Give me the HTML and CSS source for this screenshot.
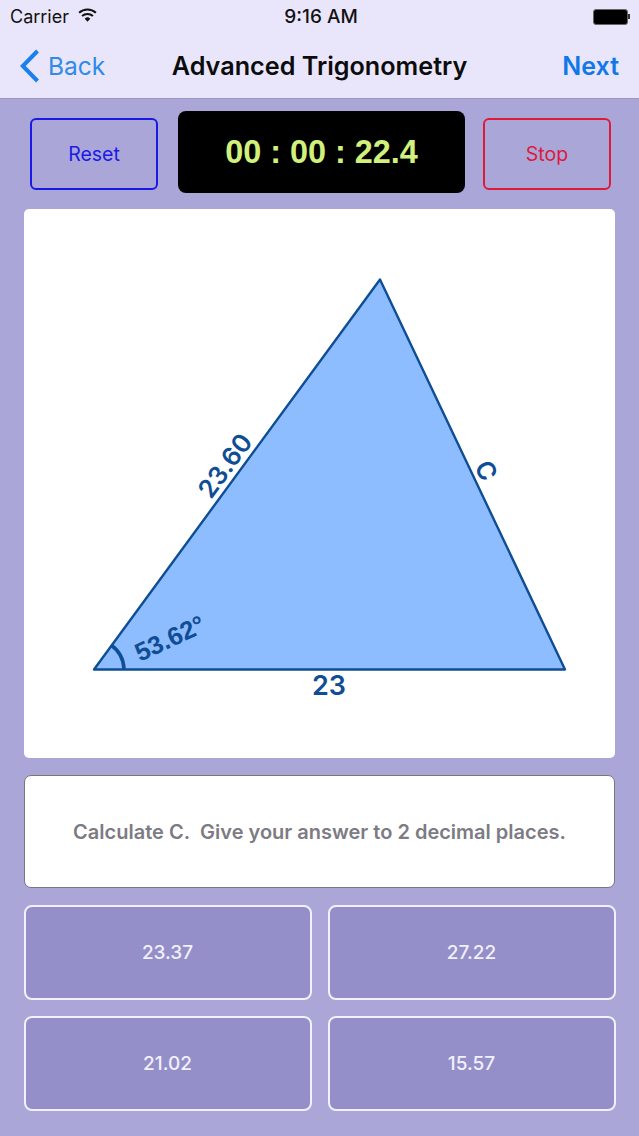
FILE: index.html
```html
<!DOCTYPE html>
<html lang="en">
<head>
    <meta charset="UTF-8">
    <meta name="viewport" content="width=device-width, initial-scale=1.0">
    <title>Advanced Trigonometry</title>
    <link rel="stylesheet" href="styles.css">
</head>
<body>
    <div id="header">
        <div class="status-bar">
            <div class="status-left">
                <span>Carrier</span>
                <svg class="wifi" width="19" height="14" viewBox="0 0 20 15">
                    <path d="M1 5.2 A13 13 0 0 1 19 5.2" fill="none" stroke="#111" stroke-width="2.2"/>
                    <path d="M4.2 8.6 A8.6 8.6 0 0 1 15.8 8.6" fill="none" stroke="#111" stroke-width="2.2"/>
                    <path d="M7 11.4 A4.4 4.4 0 0 1 13 11.4 L10 14.6 Z" fill="#111"/>
                </svg>
            </div>
            <span class="status-time">9:16 AM</span>
            <div class="battery"><div class="battery-body"></div><div class="battery-tip"></div></div>
        </div>
        <div class="nav-bar">
            <div class="nav-back">
                <svg width="22" height="34" viewBox="0 0 22 34">
                    <path d="M17.5 2 L2.8 17 L17.5 32" fill="none" stroke="#1a80ee" stroke-width="4"/>
                </svg>
                <span>Back</span>
            </div>
            <h1>Advanced Trigonometry</h1>
            <span class="nav-next">Next</span>
        </div>
    </div>

    <div id="container">
        <div class="toolbar">
            <button class="tool-btn reset">Reset</button>
            <div class="timer">00 : 00 : 22.4</div>
            <button class="tool-btn stop">Stop</button>
        </div>

        <div class="diagram">
            <svg width="591" height="549" viewBox="0 0 591 549">
                <polygon points="70,460.5 356,70.5 541,460.5" fill="#8dbdff" stroke="#0f4d94" stroke-width="2.4" stroke-linejoin="round"/>
                <path d="M87 436 A31 31 0 0 1 100 460" fill="none" stroke="#0f4d94" stroke-width="3.5"/>
                <text class="label angle" transform="translate(116 453) rotate(-25)">53.62°</text>
                <text class="label side" transform="translate(187 291) rotate(-53.7)">23.60</text>
                <text class="label side" transform="translate(450 257) rotate(64.6)">C</text>
                <text class="label" x="305" y="486" text-anchor="middle">23</text>
            </svg>
        </div>

        <div class="question">Calculate C.&nbsp; Give your answer to 2 decimal places.</div>

        <div class="answers">
            <button class="answer">23.37</button>
            <button class="answer">27.22</button>
            <button class="answer">21.02</button>
            <button class="answer">15.57</button>
        </div>
    </div>
</body>
</html>
```
FILE: styles.css
```css
* {
    margin: 0;
    padding: 0;
    box-sizing: border-box;
}
body {
    font-family: Inter, "Liberation Sans", sans-serif;
    background-color: #aaa7d8;
    height: 1136px;
    overflow: hidden;
    color: #111;
}
#header {
    height: 99px;
    background-color: #e9e6fb;
    border-bottom: 1px solid #9c98bd;
}
.status-bar {
    height: 33px;
    padding: 0 9px 0 10px;
    display: flex;
    justify-content: space-between;
    align-items: center;
    position: relative;
    font-size: 18px;
}
.status-left {
    display: flex;
    align-items: center;
    gap: 9px;
}
.wifi {
    margin-top: -4px;
}
.status-time {
    position: absolute;
    left: 3px;
    right: 0;
    text-align: center;
    font-size: 19px;
    font-weight: 500;
}
.battery {
    display: flex;
    align-items: center;
}
.battery-body {
    width: 35px;
    height: 16px;
    background-color: #000;
    border: 1px solid #666;
    border-radius: 3px;
}
.battery-tip {
    width: 2px;
    height: 5px;
    background-color: #333;
}
.nav-bar {
    height: 65px;
    padding: 0 20px;
    display: flex;
    justify-content: space-between;
    align-items: center;
    position: relative;
    font-size: 25px;
}
.nav-back {
    display: flex;
    align-items: center;
    gap: 6px;
    color: #2f8ae8;
    font-size: 24.5px;
}
.nav-bar h1 {
    position: absolute;
    left: 0;
    right: 0;
    text-align: center;
    font-size: 25.2px;
    font-weight: 600;
    color: #0c0c0c;
}
.nav-next {
    color: #1178e8;
    font-weight: 600;
}
#container {
    padding: 12px 24px 0;
}
.toolbar {
    display: flex;
    align-items: flex-start;
    padding-left: 6px;
}
button {
    font-family: inherit;
    background: none;
}
.tool-btn {
    width: 128px;
    height: 72px;
    margin-top: 7px;
    border: 2px solid;
    border-radius: 6px;
    font-size: 19.5px;
}
.reset {
    border-color: #1a1ae6;
    color: #1a1ae6;
}
.stop {
    border-color: #dc1a3c;
    color: #dc1a3c;
}
.timer {
    width: 287px;
    height: 82px;
    margin: 0 18px 0 20px;
    padding-top: 1px;
    background-color: #000;
    border-radius: 8px;
    color: #d2f07c;
    font-family: "Liberation Sans", sans-serif;
    font-size: 32.4px;
    font-weight: 700;
    display: flex;
    align-items: center;
    justify-content: center;
}
.diagram {
    margin-top: 16px;
    height: 549px;
    background-color: #fff;
    border-radius: 5px;
}
.diagram svg {
    display: block;
}
.label {
    font-size: 27px;
    font-weight: 600;
    fill: #0f4d94;
}
.label.side {
    font-size: 25.5px;
}
.label.angle {
    font-family: "Liberation Sans", sans-serif;
    font-size: 25.5px;
    font-weight: 700;
}
.question {
    margin-top: 17px;
    height: 113px;
    background-color: #fff;
    border: 1.5px solid #77757f;
    border-radius: 7px;
    color: #7d7b83;
    font-size: 20px;
    font-weight: 600;
    display: flex;
    align-items: center;
    justify-content: center;
}
.answers {
    margin: 17px -0.5px 0;
    display: grid;
    grid-template-columns: 288px 288px;
    grid-auto-rows: 94.5px;
    justify-content: space-between;
    row-gap: 16.5px;
}
.answer {
    background-color: #948fc9;
    border: 2.5px solid #f1f0fb;
    border-radius: 8px;
    color: #f1f0fb;
    font-size: 19px;
    font-weight: 500;
}
```
